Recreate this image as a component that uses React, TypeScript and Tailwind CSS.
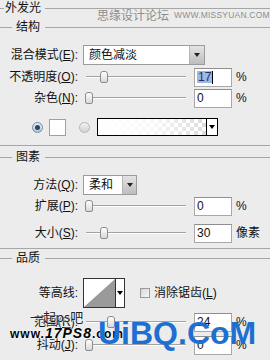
import React from "react";

function Tri({ color = "border-t-black" }: { color?: string }) {
  return (
    <div
      className={`w-0 h-0 border-l-[3px] border-r-[3px] border-t-[4px] border-l-transparent border-r-transparent ${color}`}
    />
  );
}

function Label({ children }: { children: React.ReactNode }) {
  return (
    <div className="w-[80px] shrink-0 flex justify-end pr-[2px] leading-none whitespace-nowrap">
      <span>{children}</span>
    </div>
  );
}

function U({ children }: { children: React.ReactNode }) {
  return <span className="underline underline-offset-[1px]">{children}</span>;
}

function Slider({ pos }: { pos: number }) {
  return (
    <div className="relative w-[100px] h-full ml-[6px] shrink-0">
      <div className="absolute left-0 right-0 top-[9px] h-[2px] border-t border-[#a2a2a2] border-b border-b-white" />
      <div
        className="absolute top-[4px] w-[8px] h-[12px] rounded-t-[3px] rounded-b-[2px] border border-[#8c8c8c] bg-gradient-to-b from-white to-[#d8d8d8]"
        style={{ left: pos }}
      />
    </div>
  );
}

function NumInput({ value, selected }: { value: string; selected?: boolean }) {
  return (
    <div className="ml-[8px] w-[38px] h-[19px] shrink-0 bg-white border border-[#a8a8a8] border-t-[#8e8e8e] flex items-center pl-[2px] leading-none">
      {selected ? (
        <>
          <span className="bg-[#9fb8e2] text-[#1c2f6e] px-[1px]">{value}</span>
          <span className="w-px h-[13px] bg-black" />
        </>
      ) : (
        <span>{value}</span>
      )}
    </div>
  );
}

function SliderRow({
  label,
  pos,
  value,
  unit,
  selected,
  className = "",
}: {
  label: React.ReactNode;
  pos: number;
  value: string;
  unit: string;
  selected?: boolean;
  className?: string;
}) {
  return (
    <div className={`flex items-center h-[20px] ${className}`}>
      <Label>{label}</Label>
      <Slider pos={pos} />
      <NumInput value={value} selected={selected} />
      <span className="ml-[4px] leading-none whitespace-nowrap">{unit}</span>
    </div>
  );
}

export default function App() {
  return (
    <div className="relative w-[270px] h-[360px] overflow-hidden bg-[#ececec] text-[12px] text-[#111] font-['Liberation_Sans','Noto_Sans_CJK_SC',sans-serif]">
      <div className="flex flex-col">
        {/* 外发光 */}
        <div className="flex items-center h-[16px]">
          <div className="h-px w-[4px] bg-[#a6a6a6]" />
          <span className="pl-[1px] pr-[4px] leading-none whitespace-nowrap">外发光</span>
          <div className="h-px flex-1 bg-[#a6a6a6]" />
        </div>
        {/* 结构 */}
        <div className="flex items-center h-[16px] mt-[3px]">
          <div className="h-px w-[12px] bg-[#a6a6a6]" />
          <span className="pl-[4px] pr-[5px] leading-none whitespace-nowrap">结构</span>
          <div className="h-px flex-1 bg-[#a6a6a6]" />
        </div>

        {/* 混合模式 */}
        <div className="flex items-center h-[20px] mt-[10px]">
          <Label>
            混合模式(<U>E</U>):
          </Label>
          <div className="ml-[3px] w-[122px] h-[20px] bg-white border border-[#9c9c9c] flex">
            <div className="flex-1 flex items-center pl-[5px] leading-none whitespace-nowrap">颜色减淡</div>
            <div className="w-[15px] bg-gradient-to-b from-[#e4e4e4] to-[#bdbdbd] border-l border-[#b5b5b5] flex items-center justify-center">
              <Tri color="border-t-[#222]" />
            </div>
          </div>
        </div>

        <SliderRow
          className="mt-[2px]"
          label={
            <>
              不透明度(<U>O</U>):
            </>
          }
          pos={14}
          value="17"
          unit="%"
          selected
        />
        <SliderRow
          className="mt-[1px]"
          label={
            <>
              杂色(<U>N</U>):
            </>
          }
          pos={-1}
          value="0"
          unit="%"
        />

        {/* color row */}
        <div className="flex items-center h-[20px] mt-[9px]">
          <div className="ml-[32px] w-[11px] h-[11px] rounded-full border border-[#7d8a96] bg-gradient-to-b from-[#e8eef3] to-[#b9c7d3] flex items-center justify-center">
            <div className="w-[5px] h-[5px] rounded-full bg-[#1f4a78]" />
          </div>
          <div className="ml-[6px] w-[17px] h-[17px] bg-white border border-[#a0a0a0]" />
          <div className="ml-[13px] w-[11px] h-[11px] rounded-full border border-[#b4b4b4] bg-gradient-to-b from-[#f4f4f4] to-[#d0d0d0]" />
          <div className="ml-[7px] w-[121px] h-[18px] border border-black flex bg-white">
            <div className="relative flex-1 bg-[repeating-conic-gradient(#dcdcdc_0_25%,#ffffff_0_50%)] bg-[length:8px_8px]">
              <div className="absolute inset-0 bg-gradient-to-r from-white via-white/80 to-white/0" />
            </div>
            <div className="w-[11px] border-l border-black flex items-center justify-center bg-white">
              <Tri />
            </div>
          </div>
        </div>

        <div className="h-px bg-[#a6a6a6] mt-[8px]" />

        {/* 图素 */}
        <div className="flex items-center h-[16px] mt-[3px]">
          <div className="h-px w-[12px] bg-[#a6a6a6]" />
          <span className="pl-[4px] pr-[5px] leading-none whitespace-nowrap">图素</span>
          <div className="h-px flex-1 bg-[#a6a6a6]" />
        </div>

        {/* 方法 */}
        <div className="flex items-center h-[20px] mt-[10px]">
          <Label>
            方法(<U>Q</U>):
          </Label>
          <div className="ml-[3px] w-[54px] h-[20px] bg-white border border-[#9c9c9c] flex">
            <div className="flex-1 flex items-center pl-[5px] leading-none whitespace-nowrap">柔和</div>
            <div className="w-[14px] bg-gradient-to-b from-[#e4e4e4] to-[#bdbdbd] border-l border-[#b5b5b5] flex items-center justify-center">
              <Tri color="border-t-[#222]" />
            </div>
          </div>
        </div>

        <SliderRow
          className="mt-[1px]"
          label={
            <>
              扩展(<U>P</U>):
            </>
          }
          pos={-1}
          value="0"
          unit="%"
        />
        <SliderRow
          className="mt-[7px]"
          label={
            <>
              大小(<U>S</U>):
            </>
          }
          pos={14}
          value="30"
          unit="像素"
        />

        <div className="h-px bg-[#a6a6a6] mt-[5px]" />

        {/* 品质 */}
        <div className="flex items-center h-[16px] mt-[1px]">
          <div className="h-px w-[12px] bg-[#a6a6a6]" />
          <span className="pl-[4px] pr-[5px] leading-none whitespace-nowrap">品质</span>
          <div className="h-px flex-1 bg-[#a6a6a6]" />
        </div>

        {/* 等高线 */}
        <div className="flex items-center h-[30px] mt-[12px]">
          <Label>等高线:</Label>
          <div className="ml-[3px] w-[42px] h-[30px] border border-[#333] bg-white flex">
            <svg width="31" height="28" viewBox="0 0 31 28" className="block">
              <polygon points="0,28 31,0 31,28" fill="#9a9a9a" />
            </svg>
            <div className="flex-1 border-l border-[#333] flex items-center justify-center">
              <Tri />
            </div>
          </div>
          <div className="ml-[15px] w-[10px] h-[10px] border border-[#9a9a9a] bg-gradient-to-br from-[#d6d6d6] to-[#f8f8f8]" />
          <span className="ml-[4px] leading-none whitespace-nowrap">
            消除锯齿(<U>L</U>)
          </span>
        </div>

        <SliderRow
          className="mt-[4px]"
          label={
            <>
              范围(<U>R</U>):
            </>
          }
          pos={21}
          value="24"
          unit="%"
        />
        <SliderRow
          className="mt-[3px]"
          label={
            <>
              抖动(<U>J</U>):
            </>
          }
          pos={-1}
          value="0"
          unit="%"
        />
      </div>

      {/* watermarks */}
      <div className="absolute left-[97px] top-[9px] flex items-center text-[#8e8e8e] leading-none whitespace-nowrap">
        <span className="text-[12px] font-['Noto_Sans_CJK_SC',sans-serif]">思缘设计论坛</span>
        <span className="ml-[5px] text-[8.5px] font-['Liberation_Sans',sans-serif] tracking-[0.2px]">
          WWW.MISSYUAN.COM
        </span>
      </div>

      <div className="absolute left-[30px] top-[310px] text-[13px] leading-none text-[#222] whitespace-nowrap font-['Noto_Sans_CJK_SC',sans-serif] [text-shadow:0_0_2px_#fff,0_0_2px_#fff]">
        一起ps吧
      </div>
      <div className="absolute left-[10px] top-[326px] leading-none text-black font-black whitespace-nowrap tracking-[1px] font-['Liberation_Sans',sans-serif] [text-shadow:0_0_1px_#fff,0_0_2px_#fff]">
        <span className="text-[12px]">www.</span>
        <span className="text-[14px] italic">17PS8</span>
        <span className="text-[12px]">.com</span>
      </div>

      <div className="absolute left-[98px] top-[317px] text-[32px] leading-none font-bold whitespace-nowrap text-[#1e6fd2] font-['Liberation_Sans',sans-serif]">
        UiBQ.CoM
      </div>
    </div>
  );
}
